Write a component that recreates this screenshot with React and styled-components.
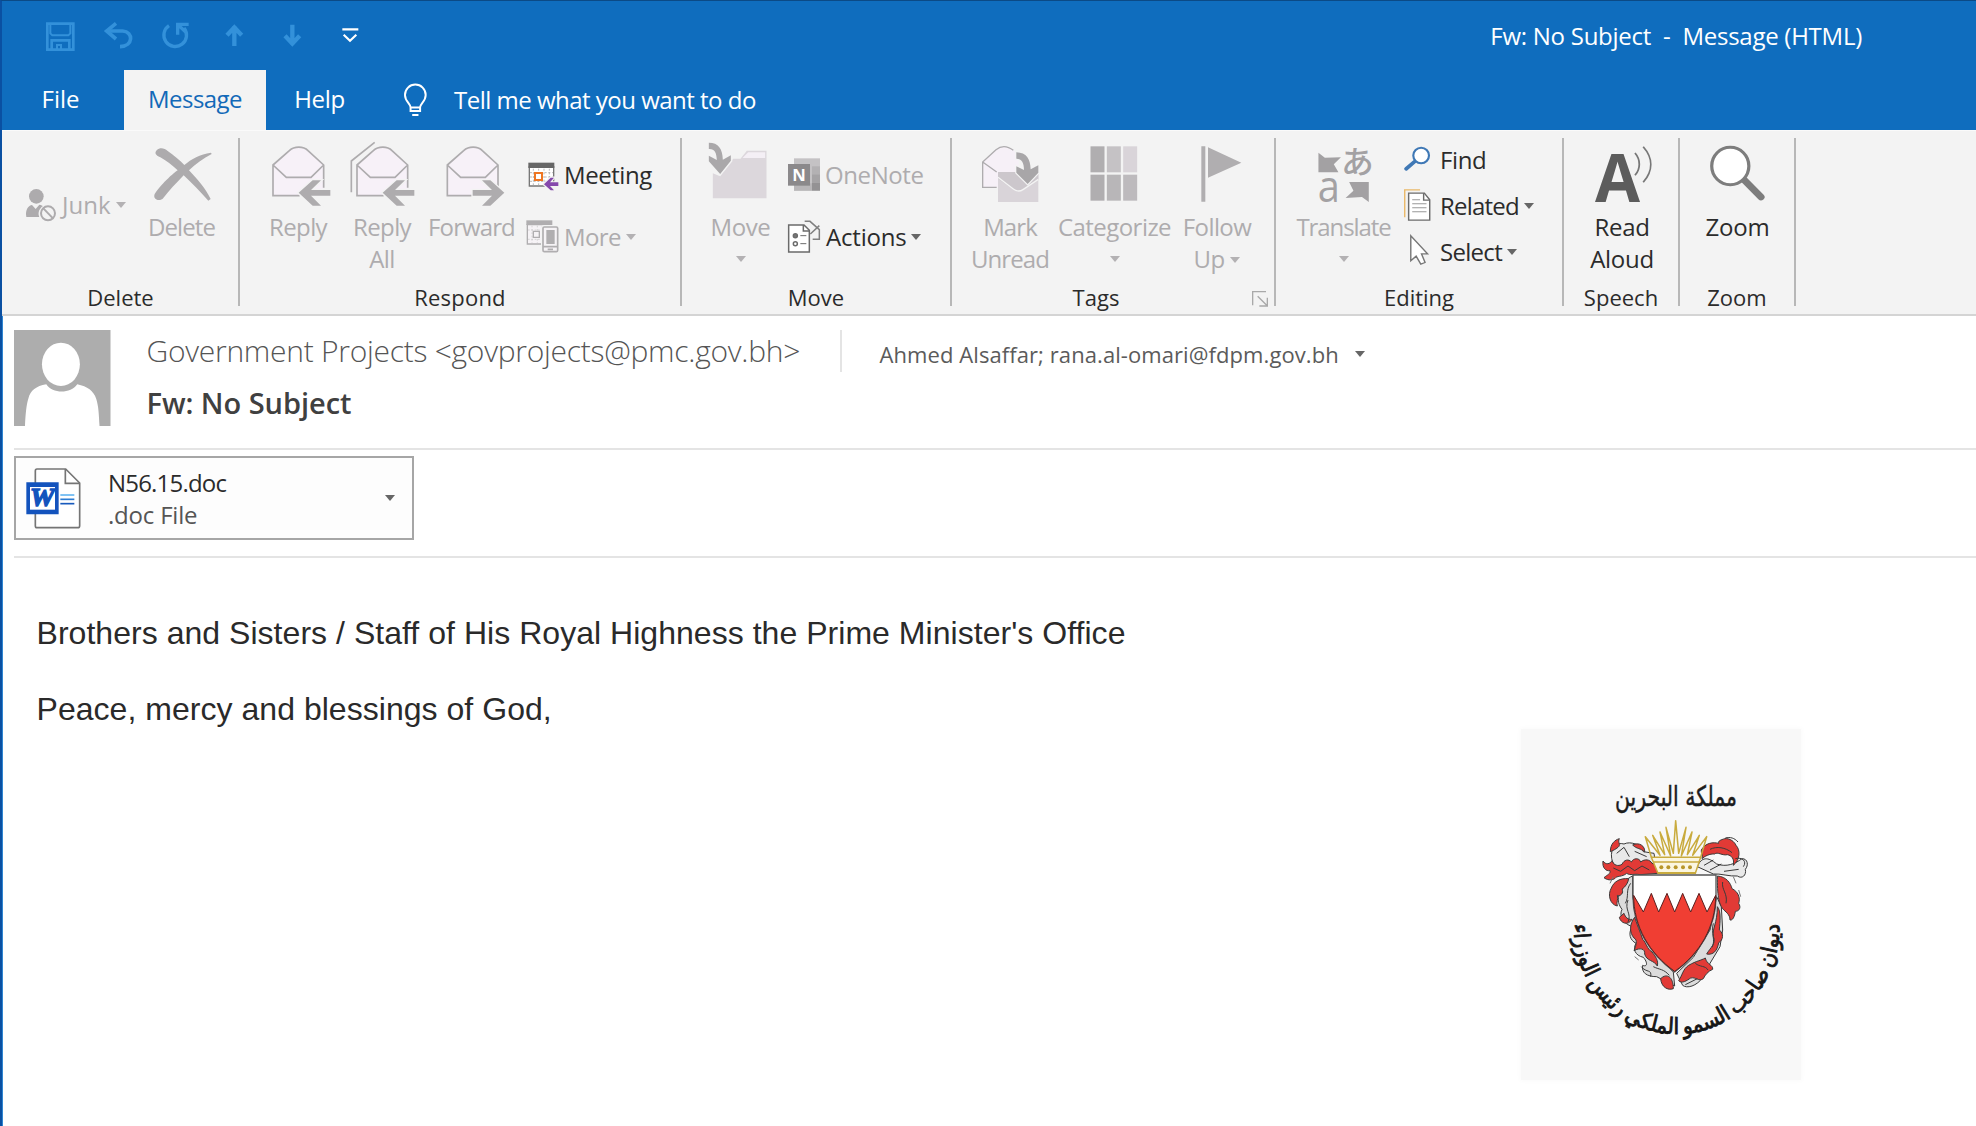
import React from 'react';
import styled, { createGlobalStyle } from 'styled-components';

const BLUE = '#0f6dbe';
const GREY = '#aeacae';
const INK = '#2b2b2b';

const GlobalStyle = createGlobalStyle`
  * { box-sizing: border-box; }
  body { margin: 0; background: #fff; overflow: hidden; }
`;

const Window = styled.div`
  display: flex;
  flex-direction: column;
  width: 1976px;
  height: 1126px;
  overflow: hidden;
  background: #fff;
  border-top: 1px solid #0b4a86;
  border-left: 2px solid #0a50a2;
  box-shadow: inset 1px 0 0 #2f86d2;
  font-family: "Open Sans", "Noto Sans", sans-serif;
  font-size: 24px;
  color: ${INK};
`;

const Text = styled.span`
  white-space: pre;
  letter-spacing: ${(p) => p.$ls || 0}px;
`;

const Icon = styled.svg`
  display: block;
  flex: none;
  overflow: visible;
  width: ${(p) => p.$w || 32}px;
  height: ${(p) => p.$h || 32}px;
`;

/* Title bar and tabs */
const TitleBar = styled.header`
  display: flex;
  align-items: center;
  height: 69px;
  padding: 0 114px 0 42px;
  background: ${BLUE};
  color: #fff;
`;
const QuickAccess = styled.div`
  display: flex;
  gap: 26px;
  margin-right: auto;
`;
const Title = styled.h1`
  margin: 0;
  font-size: 24px;
  line-height: 32px;
  font-weight: 400;
`;
const TabBar = styled.nav`
  display: flex;
  height: 60px;
  background: ${BLUE};
  color: #fff;
  line-height: 58px;
`;
const Tab = styled.div`
  width: ${(p) => p.$w}px;
  margin-right: ${(p) => p.$gap || 0}px;
  text-align: center;
  background: ${(p) => (p.$active ? '#f3f3f3' : 'transparent')};
  color: ${(p) => (p.$active ? '#1269b8' : '#fff')};
`;
const TellMe = styled.div`
  display: flex;
  align-items: center;
  gap: 27px;
  padding-left: 31px;
`;

/* Ribbon */
const Ribbon = styled.section`
  display: flex;
  height: 186px;
  padding: 7px 0 0 1px;
  background: #f3f3f3;
  border-top: 1px solid #fafafa;
  border-bottom: 2px solid #d4d4d4;
`;
const GroupBox = styled.div`
  display: flex;
  flex-direction: column;
  width: ${(p) => p.$w}px;
  height: 176px;
`;
const GroupBody = styled.div`
  display: flex;
  flex: 1;
  padding-left: ${(p) => p.$pad || 0}px;
`;
const GroupFoot = styled.div`
  display: flex;
  align-items: center;
  height: 31px;
  font-size: 22px;
  line-height: 29px;
`;
const GroupName = styled.div`
  flex: 1;
  height: 31px;
  text-align: center;
`;
const Launcher = styled.div`
  margin: 0 6px 0 12px;
`;
const Divider = styled.div`
  flex: none;
  width: 2px;
  height: 168px;
  background: #b7b7b7;
`;
const BigButton = styled.div`
  display: flex;
  flex-direction: column;
  align-items: center;
  flex: none;
  width: ${(p) => p.$w}px;
  padding-top: 5px;
  color: ${(p) => (p.$on ? INK : GREY)};
`;
const BigLabel = styled.div`
  display: flex;
  align-items: center;
  gap: 6px;
  height: 32px;
  line-height: 32px;
  margin-top: ${(p) => (p.$first ? 4 : 0)}px;
`;
const Stack = styled.div`
  display: flex;
  flex-direction: column;
  flex: none;
  width: ${(p) => p.$w || 'auto'};
  padding: ${(p) => p.$top}px 0 0 ${(p) => p.$left}px;
  gap: ${(p) => p.$gap || 0}px;
`;
const SmallButton = styled.div`
  display: flex;
  align-items: center;
  height: 32px;
  line-height: 32px;
  gap: 4px;
  color: ${(p) => (p.$on ? INK : GREY)};
`;
const SmallLabel = styled.div`
  margin-left: ${(p) => p.$ml || 0}px;
`;
const Caret = styled.i`
  flex: none;
  margin: ${(p) => (p.$high ? 0 : 2)}px 0 0 ${(p) => p.$ml || 0}px;
  border: 5px solid transparent;
  border-top: 6px solid ${(p) => (p.$on ? '#666' : '#b3b1b3')};
  border-bottom: 0;
`;

/* Message header */
const MessageHead = styled.section`
  display: flex;
  height: 134px;
  margin-left: 12px;
  padding-top: 14px;
  border-bottom: 2px solid #e4e4e4;
`;
const People = styled.div`
  display: flex;
  flex-direction: column;
  margin-left: 36px;
  width: 693px;
`;
const Sender = styled.div`
  height: 52px;
  font-size: 30px;
  font-weight: 300;
  line-height: 42px;
  color: #555;
`;
const Subject = styled.div`
  font-size: 29px;
  font-weight: 600;
  line-height: 42px;
  color: #404040;
`;
const Recipients = styled.div`
  display: flex;
  align-items: center;
  height: 42px;
  padding-left: 38px;
  border-left: 2px solid #e4e4e4;
  font-size: 22px;
  line-height: 42px;
  color: #5b5b5b;
`;
const Lowered = styled.div`
  display: flex;
  align-items: center;
  gap: 16px;
  margin-top: 6px;
`;
const Attachments = styled.section`
  height: 108px;
  margin-left: 12px;
  padding-top: 6px;
  border-bottom: 2px solid #e4e4e4;
`;
const FileCard = styled.div`
  display: flex;
  align-items: center;
  width: 400px;
  height: 84px;
  padding: 0 17px 0 8px;
  border: 2px solid #a6a6a6;
  background: #fdfdfd;
`;
const FileText = styled.div`
  flex: 1;
  margin: 2px 0 0 24px;
  line-height: 32px;
  color: ${INK};
`;
const FileKind = styled.div`
  color: #555;
`;

/* Message body */
const Body = styled.main`
  display: flex;
  align-items: flex-start;
`;
const Letter = styled.div`
  width: 1519px;
  padding: 37px 0 0 34.5px;
  font-family: "Liberation Sans", Arial, sans-serif;
  font-size: 32px;
  line-height: 76px;
  letter-spacing: 0.035px;
  color: #2a2a2a;
`;
const Line = styled.p`
  margin: 0;
`;
const Seal = styled.figure`
  margin: 171px 0 0;
  background: #f8f8f8;
  box-shadow: 0 0 5px 1px #fafafa;
`;

const QA = '#3391da';

function SaveIcon() {
  return (
    <Icon viewBox="132 60 96 96" fill="none" stroke={QA} strokeWidth="8">
      <path d="M142 71H220V149H142Z" />
      <path d="M151 72V100L157 106H205L211 100V72" strokeWidth="6" />
      <path d="M155 149V121H208V149" />
      <path d="M171 149V135H183V149" strokeWidth="6" />
    </Icon>
  );
}
function UndoIcon() {
  return (
    <Icon viewBox="306 60 96 96" fill="none" stroke={QA} strokeWidth="11">
      <path d="M320 93H368C401 95 401 139 360 140" />
      <path d="M348 70L320 93L348 117" />
    </Icon>
  );
}
function RedoIcon() {
  return (
    <Icon viewBox="480 60 96 96" fill="none" stroke={QA} strokeWidth="10">
      <path d="M507 77A34 34 0 1 0 552 84" />
      <path d="M533 104V73H566M536 76L557 96" />
    </Icon>
  );
}
function ArrowIcon({ down }) {
  return (
    <Icon viewBox="654 60 96 96" fill="none" stroke={QA} strokeWidth="13">
      {down ? <path d="M703 74V134M681 107L703 131L725 107" /> : <path d="M703 138V78M681 106L703 82L725 106" />}
    </Icon>
  );
}
function CustomizeIcon() {
  return (
    <Icon viewBox="1002 60 96 96" fill="none" stroke="#fff" strokeWidth="6.5">
      <path d="M1027 88H1075M1031 104L1050 122L1069 104" />
    </Icon>
  );
}
function BulbIcon() {
  return (
    <Icon $w={23} $h={34} viewBox="72 71 70 101" fill="none" stroke="#fff" strokeWidth="6">
      <path d="M92 155V144C92 132 75 126 75 106A31.500 31.500 0 0 1 138 106C138 126 121 132 121 144V155Z" />
      <path d="M92 144H121M97 167H116" />
    </Icon>
  );
}
function JunkIcon() {
  return (
    <Icon viewBox="78 564 96 96">
      <circle cx="109" cy="586" r="22" fill="#adabad" />
      <path d="M79 648C75 625 86 613 96 612L107 624L118 611C124 612 128 614 130 616C116 625 113 637 118 648Z" fill="#adabad" />
      <circle cx="144" cy="637" r="27" fill="#f3f3f3" />
      <circle cx="144" cy="637" r="21" fill="none" stroke="#adabad" strokeWidth="6" />
      <path d="M130 622L159 652" stroke="#adabad" strokeWidth="6" />
    </Icon>
  );
}
function DeleteIcon() {
  return (
    <Icon $w={64} $h={64} viewBox="450 429 192 192" fill="#adabad">
      <path d="M470 451C481 441 493 445 503 453C521 466 539 480 553 495C574 477 600 463 633 458L635 462C610 475 586 493 567 511C591 536 615 563 632 597L625 602C602 577 577 550 551 526C528 550 507 572 490 594C482 605 460 601 463 586C466 573 505 531 533 511C516 496 499 482 481 472C466 466 463 459 470 451Z" />
    </Icon>
  );
}
function Envelope({ x }) {
  return (
    <g transform={`translate(${x} 0)`} stroke={GREY} strokeWidth="5" fill="#f7f1f8">
      <path d="M0 66L49 23C64 9 91 9 105 23L152 66V158H0Z" stroke="none" />
      <path d="M80 158H0V66L49 23C64 9 91 9 105 23L152 66V134M0 66L40 103H114L152 66" />
    </g>
  );
}
function ReplyArrow({ x, flip }) {
  const shape = 'M146 218L188 181H213L183 210H241V227H183L213 257H188Z';
  return (
    <g transform={flip ? `translate(${x} 0) scale(-1 1)` : `translate(${x} 0)`}>
      <path d={shape} fill={GREY} stroke="#f3f3f3" strokeWidth="8" paintOrder="stroke" />
    </g>
  );
}
function ReplyIcon({ all }) {
  return (
    <Icon $w={64} $h={64} viewBox="48 69 192 192">
      <g transform="translate(0 69)">
        {all && <path d="M52 148V54L122 -2" fill="none" stroke={GREY} strokeWidth="5" />}
        <Envelope x={69} />
      </g>
      <ReplyArrow x={0} />
    </Icon>
  );
}
function ForwardIcon() {
  return (
    <Icon $w={64} $h={64} viewBox="569 69 192 192">
      <g transform="translate(0 69)">
        <Envelope x={591} />
      </g>
      <ReplyArrow x={908} flip />
    </Icon>
  );
}
function MeetingIcon() {
  return (
    <Icon viewBox="834 117 96 96">
      <path d="M838 140H911V198H838Z" fill="#fff" stroke="#777" strokeWidth="4" />
      <path d="M835 128H913V144H835Z" fill="#666" />
      <path d="M850 146V196M866 146V196M882 146V196M898 146V196M840 158H909M840 171H909M840 184H909" stroke="#aaa" strokeWidth="2.5" strokeDasharray="6 5" />
      <path d="M855 159H876V180H855Z" fill="#fff" stroke="#ee7623" strokeWidth="6" />
      <path d="M882 193L902 173H912L900 187H925V198H900L912 211H902Z" fill="#8548ac" stroke="#f3f3f3" strokeWidth="7" paintOrder="stroke" />
    </Icon>
  );
}
function MoreIcon() {
  return (
    <Icon viewBox="834 303 96 96">
      <path d="M832 314H904V372H832Z" fill="#f6f3f6" stroke="#b0aeb0" strokeWidth="4" />
      <path d="M829 301H907V315H829Z" fill="#b0aeb0" />
      <path d="M846 317V370M862 317V370M876 317V370M834 330H880M834 358H880" stroke="#c6c4c6" strokeWidth="2" strokeDasharray="5 5" />
      <path d="M850 334H868V352H850Z" fill="#f6f3f6" stroke="#b0aeb0" strokeWidth="4" />
      <rect x="879" y="321" width="44" height="74" rx="4" fill="#f6f3f6" stroke="#f3f3f3" strokeWidth="12" />
      <rect x="879" y="321" width="44" height="74" rx="4" fill="#f6f3f6" stroke="#b0aeb0" strokeWidth="5" />
      <path d="M889 330H914V372H889Z" fill="#b0aeb0" />
      <path d="M879 380H923M893 388H909" stroke="#b0aeb0" strokeWidth="5" />
    </Icon>
  );
}
function MoveIcon() {
  return (
    <Icon $w={64} $h={64} viewBox="85.5 69 192 192">
      <path d="M97 235V160L117 168L158 116H180L199 92H258V235Z" fill="#dcd7dc" />
      <path d="M186 114L203 97H254V114Z" fill="#f4eff5" />
      <path d="M85 68C114 68 126 86 127 119L151 106V122L119 162L85 124V107L109 120C108 97 102 86 85 87Z" fill="#aaa8aa" stroke="#f3f3f3" strokeWidth="9" paintOrder="stroke" />
    </Icon>
  );
}
function OneNoteIcon() {
  return (
    <Icon viewBox="324 117 96 96">
      <path d="M342 115H420V212H342Z" fill="#c4c2c4" />
      <path d="M396 139H420V163H396Z" fill="#b3b1b3" />
      <path d="M396 163H420V188H396Z" fill="#a5a3a5" />
      <path d="M396 188H420V212H396Z" fill="#949294" />
      <path d="M342 190H396V212H342Z" fill="#b8b6b8" />
      <path d="M324 132H390V197H324Z" fill="#8b898b" />
      <text x="357" y="182" fontFamily="Open Sans, sans-serif" fontWeight="700" fontSize="50" textAnchor="middle" fill="#fff">N</text>
    </Icon>
  );
}
function ActionsIcon() {
  return (
    <Icon viewBox="324 303 96 96" fill="none" stroke="#6b6b6b" strokeWidth="4.5">
      <path d="M374 304H390L418 329V358H398M391 342L418 317" stroke="#808080" />
      <path d="M326 315H372L388 331V396H326Z" fill="#fff" />
      <path d="M370 315V333H388" />
      <circle cx="346" cy="347" r="6" fill="#777" />
      <circle cx="346" cy="371" r="6" />
      <path d="M361 347H379M361 371H379" strokeWidth="3" />
    </Icon>
  );
}
function UnreadIcon() {
  return (
    <Icon $w={64} $h={64} viewBox="84 69 192 192">
      <path d="M98 202V126L138 89C153 77 172 77 190 91L206 107V160L144 202Z" fill="#f6f0f7" />
      <path d="M140 202H98V126L138 89C153 77 172 77 190 91M98 126L140 156" fill="none" stroke={GREY} strokeWidth="4" />
      <path d="M144 156H265V246H144Z" fill="#d9d4d9" />
      <path d="M144 156H265V180L216 211C208 215 200 215 192 210L144 176Z" fill="#ccc7cc" />
      <path d="M144 172L190 207C200 215 210 215 220 208L265 178" fill="none" stroke="#f3f3f3" strokeWidth="4" />
      <path d="M199 97C230 98 241 117 242 148L265 136V158L233 192L199 158V139L222 150C222 129 216 116 199 116Z" fill="#a8a6a8" stroke="#f3f3f3" strokeWidth="7" paintOrder="stroke" />
    </Icon>
  );
}
function CategorizeIcon() {
  const cells = [
    [420, 79, '#b0aeb0'], [469, 79, '#c5c2c5'], [518, 79, '#d9d4d9'],
    [420, 164, '#b0aeb0'], [469, 164, '#b8b6b8'], [518, 164, '#bdbabd'],
  ];
  return (
    <Icon $w={64} $h={64} viewBox="397.5 69 192 192">
      {cells.map(([x, y, c]) => <rect key={`${x}-${y}`} x={x} y={y} width="42" height="78" fill={c} />)}
    </Icon>
  );
}
function FlagIcon() {
  return (
    <Icon $w={64} $h={64} viewBox="707 69 192 192" fill="#b0aeb0">
      <path d="M756 79H768V245H756ZM776 82L876 128L776 173Z" />
    </Icon>
  );
}
function TranslateIcon() {
  return (
    <Icon $w={64} $h={64} viewBox="116 69 179.2 192" preserveAspectRatio="none" fill="#a3a1a3">
      <path d="M134 98L152 113L197 112L177 133L190 157H134Z" />
      <path d="M275 186V246L256 231L210 234L232 212L220 186Z" />
      <text x="243" y="160" fontFamily="Noto Sans CJK JP, sans-serif" fontSize="92" fontWeight="500" textAnchor="middle">あ</text>
      <text x="163" y="245" fontFamily="Open Sans, sans-serif" fontSize="132" textAnchor="middle" textLength="62" lengthAdjust="spacingAndGlyphs">a</text>
    </Icon>
  );
}
function FindIcon() {
  return (
    <Icon $w={28} viewBox="375 70.5 78.4 96" preserveAspectRatio="none" fill="none" stroke="#3f78b5">
      <path d="M381 145L405 123" strokeWidth="11" strokeLinecap="round" />
      <ellipse cx="423" cy="105" rx="22" ry="23.500" fill="#fff" strokeWidth="6" />
    </Icon>
  );
}
function RelatedIcon() {
  return (
    <Icon $w={28} viewBox="375 208.5 78.4 96" preserveAspectRatio="none" fill="none" stroke="#6b6b6b" strokeWidth="4">
      <path d="M377 290V208H420" stroke="#eab96a" />
      <path d="M388 218H432L447 238V299H388Z" fill="#fff" />
      <path d="M430 218V239H447" />
      <path d="M398 238H420M398 250H438M398 262H438M398 274H438" stroke="#999" strokeWidth="3" />
    </Icon>
  );
}
function SelectIcon() {
  return (
    <Icon $w={28} viewBox="375 346.500 78.4 96" preserveAspectRatio="none">
      <path d="M394 346V421L409 407L422 431L434 426L424 400H441Z" fill="#fff" stroke="#777" strokeWidth="4" />
    </Icon>
  );
}
function ReadAloudIcon() {
  return (
    <Icon $w={64} $h={64} viewBox="894 69 179.2 192" preserveAspectRatio="none">
      <text x="971" y="247" fontFamily="Open Sans, sans-serif" fontWeight="700" fontSize="200" textAnchor="middle" textLength="126" lengthAdjust="spacingAndGlyphs" fill="#5c5c5c">A</text>
      <path d="M1020 99C1036 119 1036 146 1020 166M1043 80C1071 114 1071 152 1043 187" fill="none" stroke="#777" strokeWidth="5" />
    </Icon>
  );
}
function ZoomIcon() {
  return (
    <Icon $w={64} $h={64} viewBox="1220 69 179.2 192" preserveAspectRatio="none">
      <path d="M1327 180L1374 231" stroke="#7d7d7d" strokeWidth="20" strokeLinecap="round" />
      <ellipse cx="1288" cy="138" rx="52" ry="56" fill="#fff" stroke="#7d7d7d" strokeWidth="9" />
    </Icon>
  );
}
function LauncherIcon() {
  return (
    <Icon $w={16} $h={16} viewBox="906 512 48 48" fill="none" stroke="#a9a9a9" strokeWidth="4">
      <path d="M908 555V514H948M923 528L950 555M952 532V557H928" />
    </Icon>
  );
}
function Avatar() {
  return (
    <Icon $w={96.5} $h={96} viewBox="42 60 290 288" preserveAspectRatio="none">
      <path d="M42 60H332V348H42Z" fill="#adadad" />
      <ellipse cx="183" cy="163" rx="57" ry="65" fill="#fff" />
      <path d="M75 348C77 311 79 285 85 266C92 240 108 229 139 223C158 252 212 252 232 223C263 229 281 243 289 266C296 288 297 311 299 348Z" fill="#fff" />
    </Icon>
  );
}
function WordIcon() {
  return (
    <Icon $w={60} $h={64} viewBox="72 468 180 192">
      <path d="M111 477H197L239 519V647Q239 653 233 653H111Q106 653 106 647V483Q106 477 111 477Z" fill="#fff" stroke="#757575" strokeWidth="5" />
      <path d="M196 477V520H239" fill="none" stroke="#757575" strokeWidth="5" />
      <path d="M79 517H176V613H79Z" fill="#1353bd" />
      <path d="M90 531H165V599H90Z" fill="#fff" />
      <text x="127" y="588" fontFamily="Liberation Serif, serif" fontWeight="700" fontStyle="italic" fontSize="74" textAnchor="middle" textLength="74" lengthAdjust="spacingAndGlyphs" fill="#1353bd" stroke="#1353bd" strokeWidth="4">W</text>
      <path d="M181 555H223" stroke="#41a5ee" strokeWidth="4" />
      <path d="M181 568H223" stroke="#2b7cd3" strokeWidth="5" />
      <path d="M181 581H223" stroke="#185abd" strokeWidth="5" />
    </Icon>
  );
}

const RED = '#e23a36';

function CoatOfArms() {
  return (
    <Icon $w={280} $h={351} viewBox="63 57 840 1053">
      <defs>
        <path id="motto" d="M222 640A308 318 0 0 0 838 640" />
      </defs>
      <text x="528" y="288" fontFamily="DejaVu Sans, sans-serif" fontSize="84" textAnchor="middle" direction="rtl" fill="#1c1c1c" stroke="#1c1c1c" strokeWidth="1.5" textLength="366" lengthAdjust="spacingAndGlyphs">مملكة البحرين</text>

      <g stroke="#3a3a3a" strokeWidth="3" strokeLinejoin="round">
        {/* left mantling */}
        <path fill="#e9e9e9" d="M335 445C330 415 350 395 372 402C392 392 425 405 430 425L462 430L468 470L420 492L360 482C345 470 338 460 335 445Z" />
        <path fill={RED} d="M331 425C331 402 344 390 358 386C352 397 364 404 354 412C346 418 339 422 331 425ZM398 405C417 395 436 408 434 426C422 414 411 418 398 405Z" />
        <path fill={RED} d="M312 503C322 494 332 492 330 482C318 484 306 474 309 453C318 466 330 462 336 452C341 466 354 470 366 463C372 449 386 446 394 456C400 444 418 442 422 456C434 446 450 448 456 460L474 466V490L420 494C402 490 392 498 380 490C366 502 350 496 344 506C334 512 320 510 312 503Z" />
        <path fill="#dcdcdc" d="M398 498V560L416 640L480 745L520 786L524 828L470 800C440 800 424 788 428 766C442 772 444 758 430 742C404 736 398 716 408 700C390 690 384 672 396 650C370 640 356 618 366 598C352 580 350 560 366 540C370 520 380 505 398 498Z" />
        <path fill={RED} d="M386 506C360 504 342 514 334 534C322 554 330 584 352 588C348 576 356 568 352 556C362 560 372 548 366 538C376 530 384 520 386 506ZM358 622C362 640 384 648 396 628C384 630 376 622 372 610ZM404 622C388 642 388 668 402 684C414 690 408 706 402 722C420 712 436 716 434 732C440 754 462 750 472 768C476 752 466 738 456 726C440 716 440 700 428 688C420 664 412 646 404 622ZM482 806C500 788 520 800 520 836C504 842 484 832 482 806Z" />
        <path fill="none" d="M392 520C376 540 388 560 376 580M384 570C372 600 396 610 384 636M424 770C440 790 456 776 452 800M460 770C480 780 490 776 508 796M350 430L372 412L388 440M404 424L440 440M340 474L362 484L384 468L404 482L426 468L448 480" />
        {/* right mantling */}
        <path fill="#e9e9e9" d="M592 470C604 440 624 440 650 462C680 472 704 462 726 446C744 446 746 466 736 478C740 496 726 508 712 498C690 500 660 490 640 492Z" />
        <path fill={RED} d="M604 420C616 398 640 396 656 400C654 392 662 390 674 386C690 384 704 396 708 406C722 420 720 450 700 466C704 446 694 436 682 434C668 438 652 424 644 432C630 430 612 440 606 446C610 434 602 430 604 420Z" />
        <path fill="none" d="M612 466L640 450M630 480L664 462M672 484L716 478M676 384C690 380 704 384 714 396M706 446C726 440 742 454 730 470M630 418C650 408 676 412 696 428" />
        <path fill="#dcdcdc" d="M650 560L664 590L668 660L660 710L630 760L610 800C590 830 560 836 548 826L530 790L580 742L630 660Z" />
        <path fill={RED} d="M652 498C680 500 692 520 696 536C714 544 722 564 716 580C724 592 718 604 706 604C704 620 698 632 690 630C690 612 676 606 668 596C656 580 652 556 652 498ZM652 590C664 604 660 636 658 660C672 670 670 690 656 698C652 722 640 736 620 732C630 714 650 700 640 680C636 656 652 640 652 590ZM536 812C548 794 548 778 566 766C590 752 602 752 616 744C620 764 640 764 638 778C624 784 616 794 610 806C596 816 588 800 572 804C560 812 546 822 536 812Z" />
        <path fill="none" d="M668 516C664 540 684 550 678 580M640 640C632 670 648 690 636 712M586 760C600 772 616 766 624 780M556 824L592 806" />
        <path fill="none" stroke="#777" d="M716 540L722 560M700 500L708 520M340 500L330 520M404 740L416 750" />
      </g>

      {/* crown */}
      <g fill="none" stroke="#c9ab3e" strokeWidth="4.5" strokeLinejoin="round">
        <path fill="#fbf6e0" d="M474 490L454 442H602L586 490Z" />
        <path d="M454 442L436 380L480 436L458 376L494 434L480 366L512 438L498 352L520 430L527 332L536 430L558 352L544 438L576 366L562 434L598 376L578 436L620 380L602 442" />
        <path d="M460 456H598M472 488H588" />
      </g>
      {[484, 505, 527, 549, 570].map((x) => <circle key={x} cx={x} cy="472" r="6" fill="#b8962a" />)}

      {/* shield */}
      <path d="M399 495H648V560C648 650 600 730 524 786C448 730 399 650 399 560Z" fill="#fff" stroke="#555" strokeWidth="4" />
      <path d="M401 556L430 606L454 550L476 606L501 550L524 606L548 550L572 606L597 550L621 606L647 556C647 650 600 730 524 784C448 730 401 650 401 556Z" fill="#f03e33" stroke="#5a2020" strokeWidth="3" />

      {/* motto, stretched a little taller than wide */}
      <g transform="translate(0 14)">
        <text fontFamily="DejaVu Sans Condensed, DejaVu Sans, sans-serif" fontStretch="condensed" fontSize="67" wordSpacing="-6" direction="rtl" textAnchor="middle" fill="#161616" stroke="#161616" strokeWidth="2.5">
          <textPath href="#motto" startOffset="50%">ديوان صاحب السمو الملكي رئيس الوزراء</textPath>
        </text>
      </g>
    </Icon>
  );
}

function Group({ name, width, pad, ls, launcher, children }) {
  return (
    <>
      <GroupBox $w={width}>
        <GroupBody $pad={pad}>{children}</GroupBody>
        <GroupFoot>
          <GroupName><Text $ls={ls}>{name}</Text></GroupName>
          {launcher && <Launcher><LauncherIcon /></Launcher>}
        </GroupFoot>
      </GroupBox>
      <Divider />
    </>
  );
}

function Big({ icon, lines, width, on, caret, ls = 0 }) {
  return (
    <BigButton $w={width} $on={on}>
      {icon}
      <BigLabel $first><Text $ls={ls}>{lines[0]}</Text></BigLabel>
      {(lines[1] || caret) && (
        <BigLabel>
          {lines[1] && <Text $ls={ls}>{lines[1]}</Text>}
          {caret && <Caret $on={on} $high={!lines[1]} />}
        </BigLabel>
      )}
    </BigButton>
  );
}
function Small({ icon, label, on, caret, ls, indent }) {
  return (
    <SmallButton $on={on}>
      {icon}
      <SmallLabel $ml={indent}><Text $ls={ls}>{label}</Text></SmallLabel>
      {caret && <Caret $on={on} $ml={1} $high />}
    </SmallButton>
  );
}

export default function App() {
  return (
    <>
      <GlobalStyle />
      <Window>
        <TitleBar>
          <QuickAccess>
            <SaveIcon />
            <UndoIcon />
            <RedoIcon />
            <ArrowIcon />
            <ArrowIcon down />
            <CustomizeIcon />
          </QuickAccess>
          <Title><Text $ls={-0.26}>{'Fw: No Subject  -  Message (HTML)'}</Text></Title>
        </TitleBar>
        <TabBar>
          <Tab $w={117} $gap={5}>File</Tab>
          <Tab $w={142} $active><Text $ls={-0.55}>Message</Text></Tab>
          <Tab $w={107}><Text $ls={-0.3}>Help</Text></Tab>
          <TellMe>
            <BulbIcon />
            <Text $ls={-0.51}>Tell me what you want to do</Text>
          </TellMe>
        </TabBar>

        <Ribbon>
          <Group name="Delete" width={235}>
            <Stack $w="139px" $top={51} $left={23}>
              <Small icon={<JunkIcon />} label="Junk" caret />
            </Stack>
            <Big icon={<DeleteIcon />} lines={['Delete']} width={79} ls={-0.9} />
          </Group>
          <Group name="Respond" width={440} pad={16} ls={0.2}>
            <Big icon={<ReplyIcon />} lines={['Reply']} width={84} ls={-0.6} />
            <Big icon={<ReplyIcon all />} lines={['Reply', 'All']} width={84} ls={-0.6} />
            <Big icon={<ForwardIcon />} lines={['Forward']} width={95} ls={-0.9} />
            <Stack $top={21} $left={9} $gap={30}>
              <Small icon={<MeetingIcon />} label="Meeting" on ls={-0.45} />
              <Small icon={<MoreIcon />} label="More" caret ls={-0.6} />
            </Stack>
          </Group>
          <Group name="Move" width={268} pad={12}>
            <Big icon={<MoveIcon />} lines={['Move']} width={93} caret ls={-0.4} />
            <Stack $top={21} $left={1} $gap={30}>
              <Small icon={<OneNoteIcon />} label="OneNote" ls={-0.4} indent={1} />
              <Small icon={<ActionsIcon />} label="Actions" on caret ls={-0.2} indent={2} />
            </Stack>
          </Group>
          <Group name="Tags" width={322} pad={9} launcher>
            <Big icon={<UnreadIcon />} lines={['Mark', 'Unread']} width={98} ls={-0.9} />
            <Big icon={<CategorizeIcon />} lines={['Categorize']} width={111} caret ls={-0.55} />
            <Big icon={<FlagIcon />} lines={['Follow', 'Up']} width={94} caret ls={-0.6} />
          </Group>
          <Group name="Editing" width={286} pad={9}>
            <Big icon={<TranslateIcon />} lines={['Translate']} width={117} caret ls={-1.1} />
            <Stack $top={6} $left={2} $gap={14}>
              <Small icon={<FindIcon />} label="Find" on ls={-0.4} indent={4} />
              <Small icon={<RelatedIcon />} label="Related" on caret ls={-0.8} indent={4} />
              <Small icon={<SelectIcon />} label="Select" on caret ls={-0.7} indent={4} />
            </Stack>
          </Group>
          <Group name="Speech" width={114}>
            <Big icon={<ReadAloudIcon />} lines={['Read', 'Aloud']} width={116} on ls={-0.3} />
          </Group>
          <Group name="Zoom" width={114}>
            <Big icon={<ZoomIcon />} lines={['Zoom']} width={115} on ls={-0.2} />
          </Group>
        </Ribbon>

        <MessageHead>
          <Avatar />
          <People>
            <Sender><Text $ls={-0.27}>{'Government Projects <govprojects@pmc.gov.bh>'}</Text></Sender>
            <Subject><Text $ls={-0.05}>Fw: No Subject</Text></Subject>
          </People>
          <Recipients>
            <Lowered>
              <Text $ls={0.08}>Ahmed Alsaffar; rana.al-omari@fdpm.gov.bh</Text>
              <Caret $on $high />
            </Lowered>
          </Recipients>
        </MessageHead>
        <Attachments>
          <FileCard>
            <WordIcon />
            <FileText>
              <div><Text $ls={-0.8}>N56.15.doc</Text></div>
              <FileKind><Text $ls={-0.2}>.doc File</Text></FileKind>
            </FileText>
            <Caret $on $high />
          </FileCard>
        </Attachments>
        <Body>
          <Letter>
            <Line>Brothers and Sisters / Staff of His Royal Highness the Prime Minister's Office</Line>
            <Line>Peace, mercy and blessings of God,</Line>
          </Letter>
          <Seal><CoatOfArms /></Seal>
        </Body>
      </Window>
    </>
  );
}
